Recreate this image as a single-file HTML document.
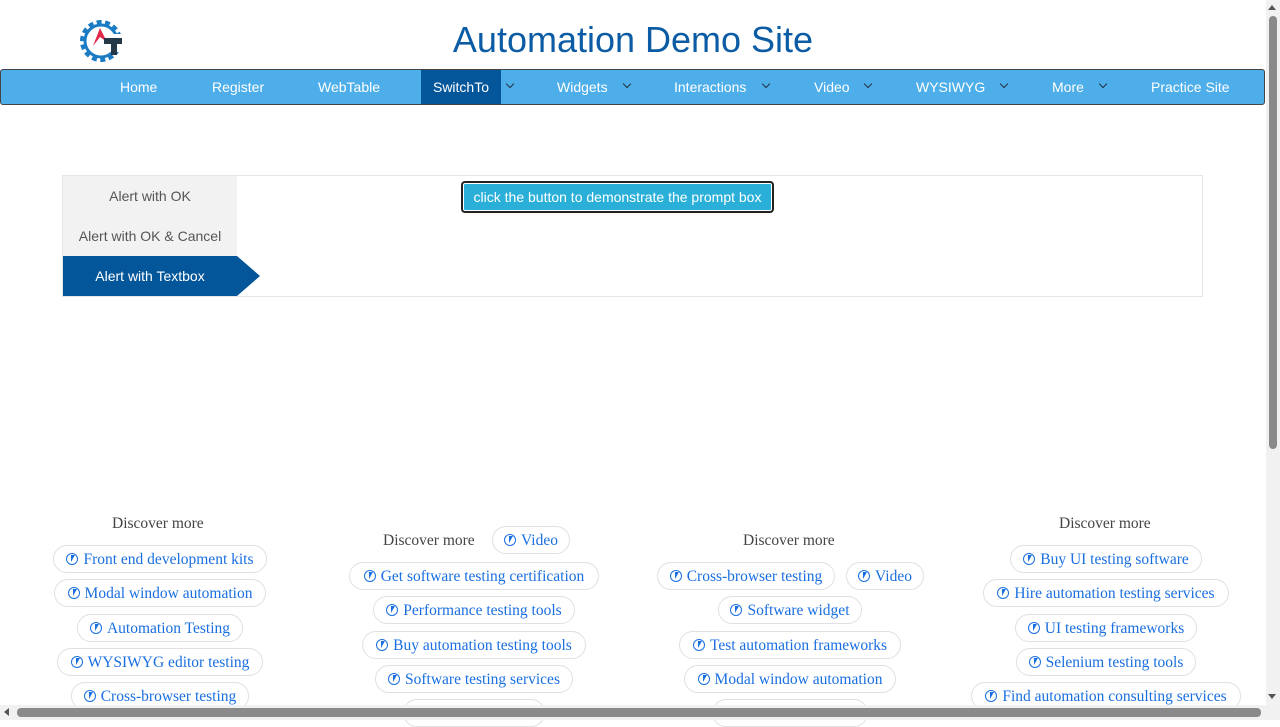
<!DOCTYPE html>
<html><head><style>
*{box-sizing:border-box;margin:0;padding:0}
body{width:1280px;height:720px;overflow:hidden;background:#fff;font-family:"Liberation Sans",sans-serif;position:relative}
.a{position:absolute}
h1{position:absolute;left:0;width:1266px;text-align:center;top:19px;font-weight:normal;font-size:36px;color:#0b5ca4}
.nav{left:0;top:69px;width:1265px;height:36px;background:#4eaeea;border:1px solid #444;border-radius:3px}
.ni{position:absolute;top:0;height:34px;line-height:35px;color:#fff;font-size:14px}
.car{position:absolute;top:8px;width:6px;height:6px;border-right:1.3px solid #234;border-bottom:1.3px solid #234;transform:rotate(45deg)}
.pill{position:absolute;height:28px;border:1px solid #e0e0e0;border-radius:14px;font-family:"Liberation Serif",serif;font-size:15.5px;color:#1a6fe0;text-align:center;line-height:28px;white-space:nowrap}
.pill i{display:inline-block;width:12px;height:12px;border:1.5px solid #1a6fe0;border-radius:50%;margin-right:5px;vertical-align:-1px;position:relative}
.pill i:after{content:"";position:absolute;left:3px;top:1px;width:0;height:0;border-left:2px solid transparent;border-right:2px solid transparent;border-top:7px solid #1a6fe0;transform:skewX(-15deg)}
.dm{position:absolute;font-family:"Liberation Serif",serif;font-size:15.5px;color:#444}
</style></head><body>
<svg class="a" style="left:78px;top:15px" width="48" height="52" viewBox="0 0 48 52">
<circle cx="23" cy="26" r="19" fill="none" stroke="#1b7cc4" stroke-width="4" stroke-dasharray="5 3.5"/>
<circle cx="23" cy="26" r="16" fill="none" stroke="#1b7cc4" stroke-width="3"/>
<rect x="33" y="19" width="15" height="18" fill="#fff"/>
<path d="M15 31 L22 13 L29 27 L22 22 Z" fill="#e0284a"/>
<path d="M26 23 H44 V29 H39 V40 H33 V29 H26Z" fill="#243847"/>
</svg>
<h1>Automation Demo Site</h1>
<div class="a nav">
<div class="ni" style="left:119px">Home</div>
<div class="ni" style="left:211px">Register</div>
<div class="ni" style="left:317px">WebTable</div>
<div class="ni" style="left:420px;width:80px;background:#04569a;text-align:center">SwitchTo</div>
<div class="car" style="left:506px;top:11px"></div>
<div class="ni" style="left:556px">Widgets</div><div class="car" style="left:623px;top:11px"></div>
<div class="ni" style="left:673px">Interactions</div><div class="car" style="left:762px;top:11px"></div>
<div class="ni" style="left:813px">Video</div><div class="car" style="left:864px;top:11px"></div>
<div class="ni" style="left:915px">WYSIWYG</div><div class="car" style="left:1000px;top:11px"></div>
<div class="ni" style="left:1051px">More</div><div class="car" style="left:1099px;top:11px"></div>
<div class="ni" style="left:1150px">Practice Site</div>
</div>
<div class="a" style="left:62px;top:175px;width:1141px;height:122px;border:1px solid #e6e6e6"></div>
<div class="a" style="left:63px;top:176px;width:174px;height:80px;background:#f2f2f2"></div>
<div class="a" style="left:63px;top:188px;width:174px;text-align:center;font-size:14px;color:#555">Alert with OK</div>
<div class="a" style="left:63px;top:228px;width:174px;text-align:center;font-size:14px;color:#555">Alert with OK &amp; Cancel</div>
<div class="a" style="left:63px;top:256px;width:174px;height:40px;background:#04569a;color:#fff;text-align:center;line-height:41px;font-size:14px">Alert with Textbox</div>
<div class="a" style="left:237px;top:256px;width:0;height:0;border-top:20px solid transparent;border-bottom:20px solid transparent;border-left:23px solid #04569a"></div>
<div class="a" style="left:461px;top:181px;width:313px;height:32px;background:#2ab0d8;border:2px solid #222;border-radius:4px;color:#fff;font-size:14px;text-align:center;line-height:29px;box-shadow:inset 0 0 0 1px #fff">click the button to demonstrate the prompt box</div>

<div class="dm" style="left:112px;top:515px">Discover more</div>
<div class="pill" style="left:53px;top:545px;width:214px"><i></i>Front end development kits</div>
<div class="pill" style="left:54px;top:579px;width:212px"><i></i>Modal window automation</div>
<div class="pill" style="left:77px;top:614px;width:166px"><i></i>Automation Testing</div>
<div class="pill" style="left:57px;top:648px;width:206px"><i></i>WYSIWYG editor testing</div>
<div class="pill" style="left:71px;top:682px;width:178px"><i></i>Cross-browser testing</div>

<div class="dm" style="left:383px;top:532px">Discover more</div>
<div class="pill" style="left:492px;top:526px;width:78px"><i></i>Video</div>
<div class="pill" style="left:349px;top:562px;width:250px"><i></i>Get software testing certification</div>
<div class="pill" style="left:373px;top:596px;width:202px"><i></i>Performance testing tools</div>
<div class="pill" style="left:362px;top:631px;width:224px"><i></i>Buy automation testing tools</div>
<div class="pill" style="left:375px;top:665px;width:198px"><i></i>Software testing services</div>
<div class="pill" style="left:403px;top:699px;width:142px"></div>

<div class="dm" style="left:743px;top:532px">Discover more</div>
<div class="pill" style="left:657px;top:562px;width:178px"><i></i>Cross-browser testing</div>
<div class="pill" style="left:846px;top:562px;width:78px"><i></i>Video</div>
<div class="pill" style="left:718px;top:596px;width:144px"><i></i>Software widget</div>
<div class="pill" style="left:679px;top:631px;width:222px"><i></i>Test automation frameworks</div>
<div class="pill" style="left:684px;top:665px;width:212px"><i></i>Modal window automation</div>
<div class="pill" style="left:712px;top:699px;width:156px"></div>

<div class="dm" style="left:1059px;top:515px">Discover more</div>
<div class="pill" style="left:1010px;top:545px;width:192px"><i></i>Buy UI testing software</div>
<div class="pill" style="left:983px;top:579px;width:246px"><i></i>Hire automation testing services</div>
<div class="pill" style="left:1015px;top:614px;width:182px"><i></i>UI testing frameworks</div>
<div class="pill" style="left:1016px;top:648px;width:180px"><i></i>Selenium testing tools</div>
<div class="pill" style="left:971px;top:682px;width:270px"><i></i>Find automation consulting services</div>

<div class="a" style="left:1266px;top:0;width:14px;height:705px;background:#f1f1f1"></div>
<div class="a" style="left:1269px;top:16px;width:8px;height:433px;background:#8a8a8a;border-radius:4px"></div>
<div class="a" style="left:0;top:705px;width:1280px;height:15px;background:#f1f1f1"></div>
<div class="a" style="left:17px;top:708px;width:1244px;height:9px;background:#8a8a8a;border-radius:4px"></div>
<div class="a" style="left:4px;top:708px;width:0;height:0;border-top:4px solid transparent;border-bottom:4px solid transparent;border-right:5px solid #555"></div>
<div class="a" style="left:1268px;top:5px;width:0;height:0;border-left:4px solid transparent;border-right:4px solid transparent;border-bottom:5px solid #555"></div>
<div class="a" style="left:1268px;top:694px;width:0;height:0;border-left:4px solid transparent;border-right:4px solid transparent;border-top:5px solid #555"></div>
</body></html>
